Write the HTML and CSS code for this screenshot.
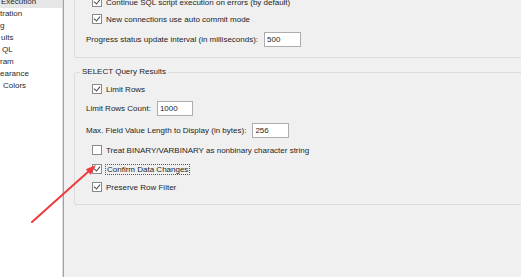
FILE: index.html
```html
<!DOCTYPE html>
<html lang="en">
<head>
    <meta charset="UTF-8">
    <title>Preferences - SQL Execution</title>
    <link rel="stylesheet" href="styles.css">
</head>
<body>

<div class="window">
    <!-- left tree, scrolled horizontally -->
    <ul class="tree">
        <li class="selected">Execution</li>
        <li>tration</li>
        <li>g</li>
        <li class="ind1">ults</li>
        <li class="ind2">QL</li>
        <li>ram</li>
        <li>earance</li>
        <li class="ind3">Colors</li>
    </ul>

    <main class="panel">
        <fieldset class="group group-general">
            <div class="row check-row">
                <span class="check on"></span>
                <span>Continue SQL script execution on errors (by default)</span>
            </div>
            <div class="row check-row">
                <span class="check on"></span>
                <span>New connections use auto commit mode</span>
            </div>
            <div class="row field-row">
                <span>Progress status update interval (in milliseconds):</span>
                <span class="input w37">500</span>
            </div>
        </fieldset>

        <fieldset class="group group-select">
            <legend>SELECT Query Results</legend>
            <div class="row check-row">
                <span class="check on"></span>
                <span>Limit Rows</span>
            </div>
            <div class="row field-row">
                <span>Limit Rows Count:</span>
                <span class="input w36">1000</span>
            </div>
            <div class="row field-row max-row">
                <span>Max. Field Value Length to Display (in bytes):</span>
                <span class="input w37">256</span>
            </div>
            <div class="row check-row">
                <span class="check"></span>
                <span>Treat BINARY/VARBINARY as nonbinary character string</span>
            </div>
            <div class="row check-row">
                <span class="check on"></span>
                <span class="focused">Confirm Data Changes</span>
            </div>
            <div class="row check-row last-row">
                <span class="check on"></span>
                <span>Preserve Row Filter</span>
            </div>
        </fieldset>
    </main>
</div>

<!-- red annotation arrow -->
<svg class="arrow" width="521" height="277" viewBox="0 0 521 277">
    <line x1="32" y1="222" x2="89" y2="171" stroke="#ef3b3b" stroke-width="2" stroke-linecap="round"/>
    <polygon points="96,165 90.8,174.8 85.8,169.2" fill="#ef3b3b"/>
</svg>

</body>
</html>
```

FILE: styles.css
```css
body {
    margin: 0;
    padding: 0;
    font-family: "Liberation Sans", Arial, sans-serif;
    font-size: 8px;
    color: #1e1e1e;
    background-color: #f0f0f0;
    overflow: hidden;
}
.window {
    display: flex;
    width: 521px;
    height: 277px;
    overflow: hidden;
}
.tree {
    list-style: none;
    margin: 0;
    padding: 0;
    width: 62px;
    flex-shrink: 0;
    background-color: #ffffff;
    border-right: 1px solid #dadada;
    box-shadow: 1px 0 0 #a3a3a3;
    margin-right: 1px;
    color: #2a2a2a;
}
.tree li {
    height: 12px;
    line-height: 12px;
    white-space: nowrap;
    padding-left: 0;
}
.tree li:first-child {
    margin-top: -4px;
}
.tree li.selected {
    background-color: #e6e6e6;
    padding-left: 1px;
}
.tree li.ind1 {
    padding-left: 1px;
}
.tree li.ind2 {
    padding-left: 2px;
}
.tree li.ind3 {
    padding-left: 3px;
}
.panel {
    flex: 1;
    padding-left: 10px;
    overflow: hidden;
}
.group {
    margin: 0 -20px 0 0;
    padding: 0;
    border: 1px solid #dcdcdc;
    border-radius: 2px;
    display: flex;
    flex-direction: column;
    min-width: 0;
}
.group-general {
    margin-top: -30px;
    padding-top: 24px;
    padding-bottom: 10px;
    gap: 3px;
}
.group-general .field-row {
    margin-top: 3px;
}
.group-select {
    margin-top: 9px;
    padding-bottom: 10px;
    gap: 5px;
}
.group-select legend {
    margin-left: 5px;
    padding: 0 2px;
    height: 10px;
    line-height: 10px;
    margin-bottom: 5px;
}
.group-select .max-row {
    margin-top: 2px;
}
.group-select .last-row {
    margin-top: -1px;
}
.row {
    display: flex;
    align-items: center;
    white-space: nowrap;
}
.check-row {
    height: 14px;
    padding-left: 17px;
    gap: 4px;
}
.field-row {
    height: 15px;
    padding-left: 11px;
    gap: 6px;
}
.check {
    width: 8px;
    height: 8px;
    border: 1px solid #8a8a8a;
    background-color: #ffffff;
    position: relative;
}
.check.on::after {
    content: "";
    position: absolute;
    left: 2px;
    top: 0px;
    width: 3px;
    height: 5px;
    border-right: 1.2px solid #4a4a4a;
    border-bottom: 1.2px solid #4a4a4a;
    transform: rotate(40deg);
}
.input {
    height: 13px;
    line-height: 13px;
    border: 1px solid #adadad;
    background-color: #ffffff;
    padding-left: 2px;
    box-sizing: content-box;
}
.w37 {
    width: 33px;
}
.w36 {
    width: 32px;
}
.focused {
    outline: 1px dotted #555555;
    outline-offset: 0;
    padding: 0 1px;
    line-height: 9px;
}
.arrow {
    position: absolute;
    left: 0;
    top: 0;
    pointer-events: none;
}
```
